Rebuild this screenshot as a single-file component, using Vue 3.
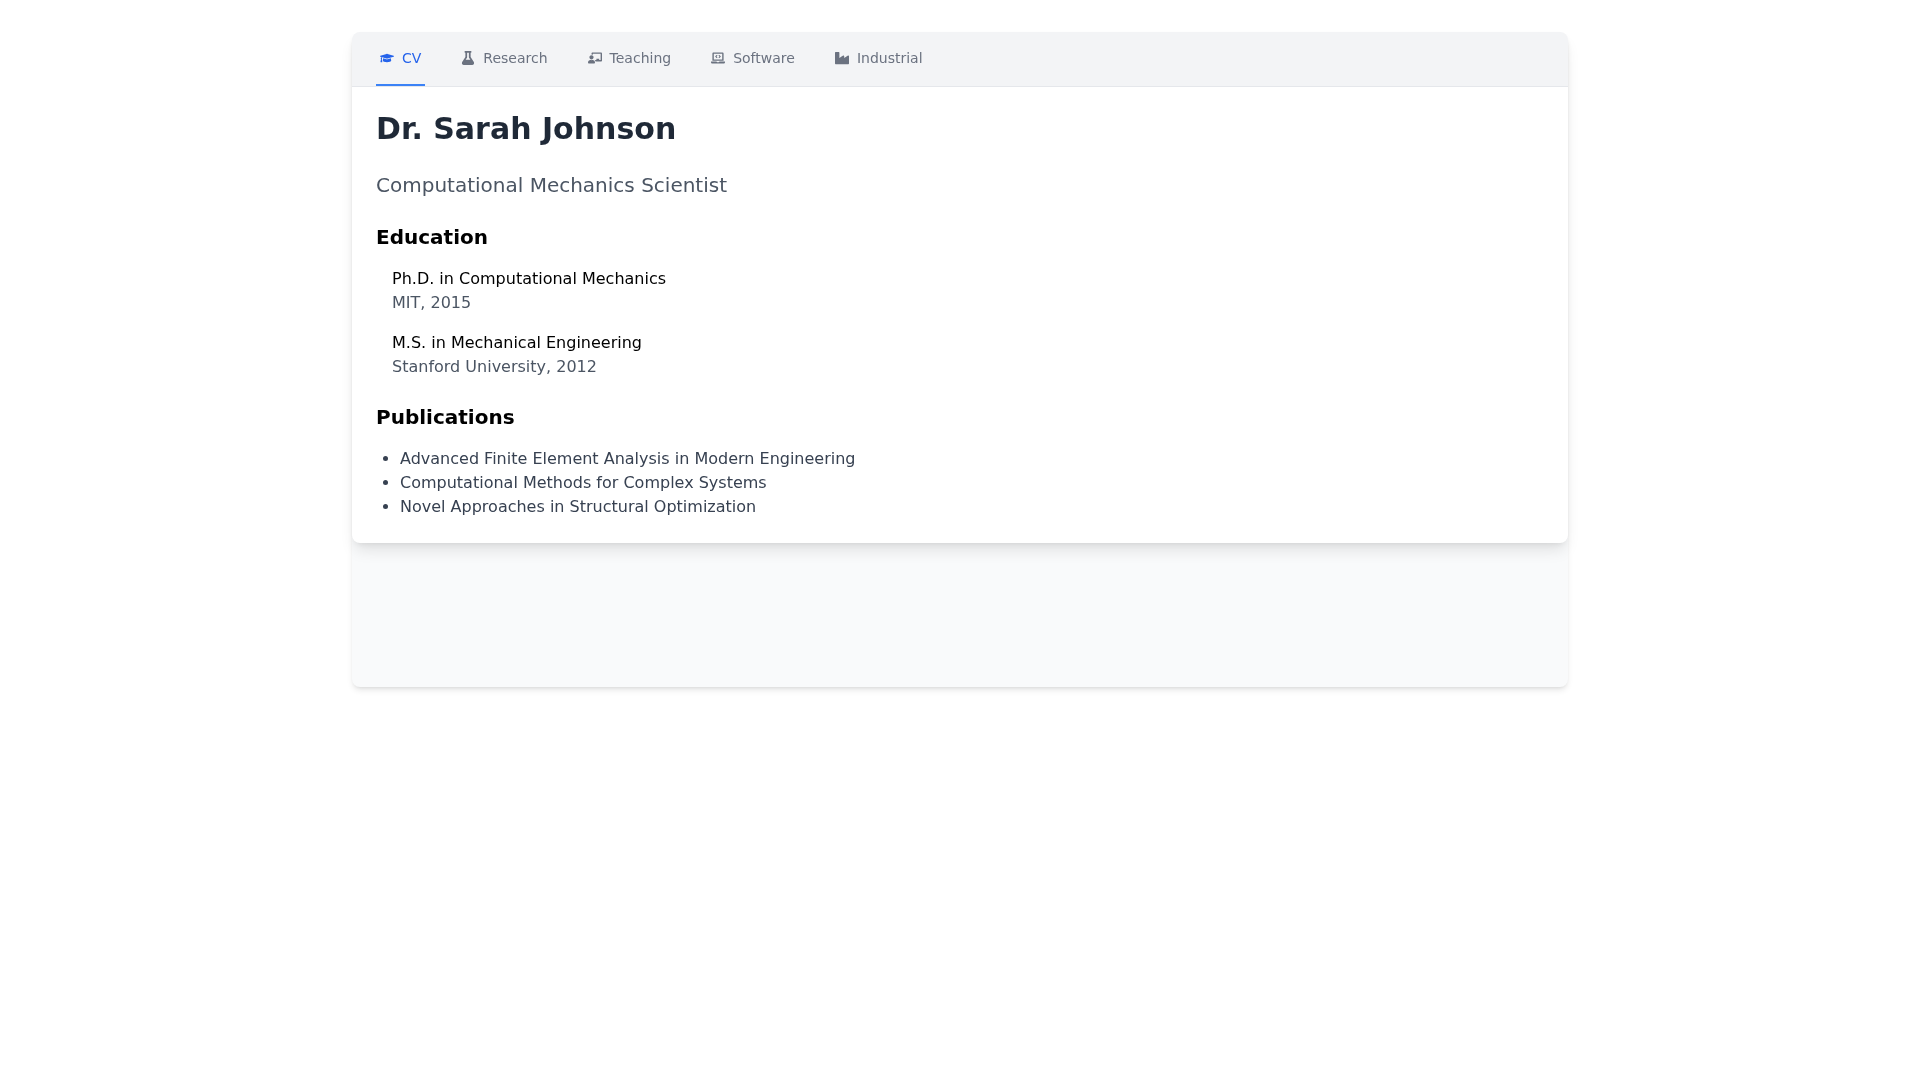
<script setup>
const tabs = [
  { label: 'CV', vb: '0 0 640 512', d: 'M622.34 153.2L343.4 67.5c-15.2-4.67-31.6-4.67-46.79 0L17.66 153.2c-23.54 7.23-23.54 38.36 0 45.59l48.63 14.94c-10.67 13.19-17.23 29.28-17.88 46.9C38.78 266.15 32 276.11 32 288c0 10.78 5.68 19.85 13.86 25.65L20.33 428.53C18.11 438.52 25.71 448 35.94 448h56.11c10.24 0 17.84-9.48 15.62-19.47L82.14 313.65C90.32 307.85 96 298.78 96 288c0-11.57-6.47-21.25-15.66-26.87.76-15.02 8.44-28.3 20.69-36.72L296.6 284.5c9.06 2.78 26.44 6.25 46.79 0l278.95-85.7c23.55-7.24 23.55-38.36 0-45.6zM352.79 315.09c-28.53 8.76-52.84 3.92-65.59 0l-145.02-44.55L128 384c0 35.35 85.96 64 192 64s192-28.65 192-64l-14.18-113.47-145.03 44.56z', active: true },
  { label: 'Research', vb: '0 0 448 512', d: 'M437.2 403.5L320 215V64h8c13.3 0 24-10.7 24-24V24c0-13.3-10.7-24-24-24H120c-13.3 0-24 10.7-24 24v16c0 13.3 10.7 24 24 24h8v151L10.8 403.5C-18.5 450.6 15.3 512 70.9 512h306.2c55.7 0 89.4-61.5 60.1-108.5zM137.9 320l48.2-77.6c3.7-5.2 5.8-11.6 5.8-18.4V64h64v160c0 6.9 2.2 13.2 5.8 18.4l48.2 77.6h-172z' },
  { label: 'Teaching', vb: '0 0 640 512', d: 'M208 352c-2.39 0-4.78.35-7.06 1.09C187.98 357.3 174.35 360 160 360c-14.35 0-27.98-2.7-40.95-6.91-2.28-.74-4.66-1.09-7.05-1.09C49.94 352-.33 402.48 0 464.62.14 490.88 21.73 512 48 512h224c26.27 0 47.86-21.12 48-47.38.33-62.14-49.94-112.62-112-112.62zm-48-32c53.02 0 96-42.98 96-96s-42.98-96-96-96-96 42.98-96 96 42.98 96 96 96zM592 0H208c-26.47 0-48 22.25-48 49.59V96c23.42 0 45.1 6.78 64 17.8V64h352v288h-64v-64H384v64h-76.24c19.1 16.69 33.12 38.73 39.69 64H592c26.47 0 48-22.25 48-49.59V49.59C640 22.25 618.47 0 592 0z' },
  { label: 'Software', vb: '0 0 640 512', d: 'M255.03 261.65c6.25 6.25 16.38 6.25 22.63 0l11.31-11.31c6.25-6.25 6.25-16.38 0-22.63L253.25 192l35.71-35.72c6.25-6.25 6.25-16.38 0-22.63l-11.31-11.31c-6.25-6.25-16.38-6.25-22.63 0l-58.34 58.34c-6.25 6.25-6.25 16.38 0 22.63l58.35 58.34zm96.01-11.3l11.31 11.31c6.25 6.25 16.38 6.25 22.63 0l58.34-58.34c6.25-6.25 6.25-16.38 0-22.63l-58.34-58.34c-6.25-6.25-16.38-6.25-22.63 0l-11.31 11.31c-6.25 6.25-6.25 16.38 0 22.63L386.75 192l-35.71 35.72c-6.25 6.25-6.25 16.38 0 22.63zM624 416H381.54c-.74 19.81-14.71 32-32.74 32H288c-18.69 0-33.02-17.47-32.77-32H16c-8.8 0-16 7.2-16 16v16c0 35.2 28.8 64 64 64h512c35.2 0 64-28.8 64-64v-16c0-8.8-7.2-16-16-16zM576 48c0-26.4-21.6-48-48-48H112C85.6 0 64 21.6 64 48v336h512V48zm-64 272H128V64h384v256z' },
  { label: 'Industrial', vb: '0 0 512 512', d: 'M475.115 163.781L336 252.309v-68.28c0-18.916-20.931-30.399-36.885-20.248L160 252.309V56c0-13.255-10.745-24-24-24H24C10.745 32 0 42.745 0 56v400c0 13.255 10.745 24 24 24h464c13.255 0 24-10.745 24-24V184.029c0-18.917-20.931-30.399-36.885-20.248z' }
]
const education = [
  { degree: 'Ph.D. in Computational Mechanics', school: 'MIT, 2015' },
  { degree: 'M.S. in Mechanical Engineering', school: 'Stanford University, 2012' }
]
const publications = [
  'Advanced Finite Element Analysis in Modern Engineering',
  'Computational Methods for Complex Systems',
  'Novel Approaches in Structural Optimization'
]
</script>

<template>
  <div class="page">
    <div class="shell">
      <div class="card">
        <nav class="tabs">
          <a v-for="t in tabs" :key="t.label" class="tab" :class="{ active: t.active }">
            <svg class="icon" :viewBox="t.vb" fill="currentColor"><path :d="t.d" /></svg>
            <span>{{ t.label }}</span>
          </a>
        </nav>
        <main class="content">
          <h1>Dr. Sarah Johnson</h1>
          <p class="subtitle">Computational Mechanics Scientist</p>
          <section class="section">
            <h2>Education</h2>
            <div class="edu-list">
              <div v-for="e in education" :key="e.degree" class="edu">
                <div class="degree">{{ e.degree }}</div>
                <div class="school">{{ e.school }}</div>
              </div>
            </div>
          </section>
          <section>
            <h2>Publications</h2>
            <ul>
              <li v-for="p in publications" :key="p">{{ p }}</li>
            </ul>
          </section>
        </main>
      </div>
    </div>
  </div>
</template>

<style>
html, body { margin: 0; background: #fff; }
</style>

<style scoped>
.page {
  box-sizing: border-box;
  min-height: 100vh;
  padding-top: 32px;
  font-family: "DejaVu Sans", sans-serif;
  font-size: 16px;
  line-height: 24px;
  color: #000;
}
.shell {
  width: 1216px;
  margin: 0 auto;
  padding-bottom: 144px;
  background: #f9fafb;
  border-radius: 8px;
  box-shadow: 0 4px 6px -1px rgba(0,0,0,.1), 0 2px 4px -2px rgba(0,0,0,.1);
  will-change: opacity;
}
.card {
  background: #fff;
  border-radius: 8px;
  overflow: hidden;
  box-shadow: 0 10px 15px -3px rgba(0,0,0,.1), 0 4px 6px -4px rgba(0,0,0,.1);
}
.tabs {
  display: flex;
  gap: 32px;
  padding: 0 24px;
  background: #f3f4f6;
  border-bottom: 1px solid #e5e7eb;
}
.tab {
  display: flex;
  align-items: center;
  gap: 8px;
  padding: 16px 4px;
  font-size: 14px;
  line-height: 20px;
  color: #6b7280;
  border-bottom: 2px solid transparent;
}
.tab.active {
  color: #2563eb;
  border-bottom-color: #3b82f6;
}
.icon { width: 14px; height: 14px; flex: none; }
.content { padding: 24px; }
h1 {
  margin: 0 0 24px;
  font-size: 30px;
  line-height: 36px;
  font-weight: 700;
  color: #1f2937;
}
.subtitle {
  margin: 0 0 24px;
  font-size: 20px;
  line-height: 28px;
  color: #4b5563;
}
h2 {
  margin: 0 0 16px;
  font-size: 20px;
  line-height: 28px;
  font-weight: 700;
  color: #000;
}
.section { margin-bottom: 24px; }
.edu-list { display: flex; flex-direction: column; gap: 16px; padding-left: 16px; }
.school { color: #4b5563; }
ul { margin: 0; padding: 0 0 0 24px; color: #374151; list-style: disc; }
</style>
